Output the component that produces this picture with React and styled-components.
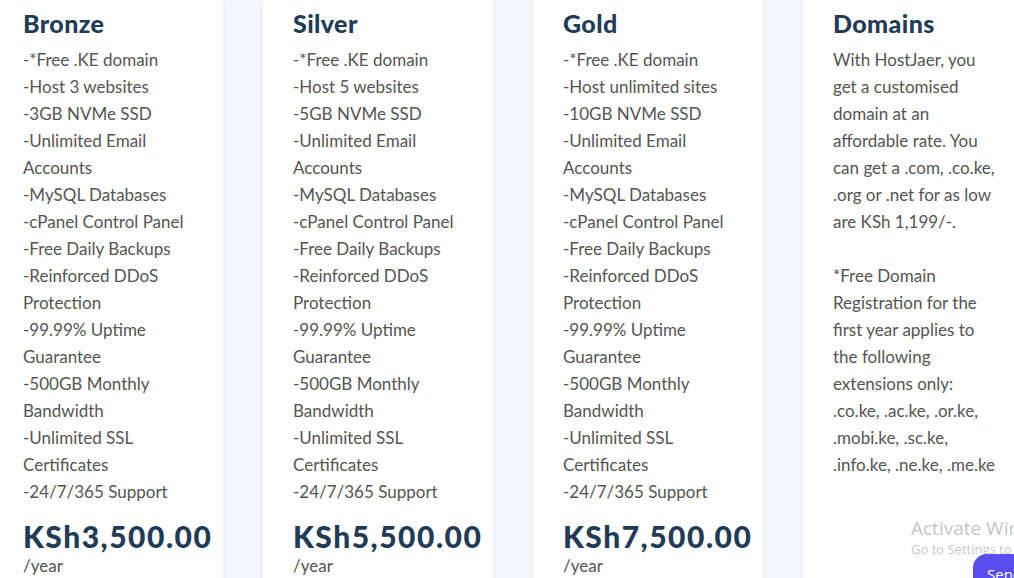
import styled, { createGlobalStyle } from "styled-components";

const GlobalStyle = createGlobalStyle`
  html, body {
    margin: 0;
    padding: 0;
    background: #f4f7fb;
    overflow: hidden;
  }
  body {
    font-family: Lato, "Open Sans", sans-serif;
  }
`;

const plans = [
  {
    name: "Bronze",
    sites: "-Host 3 websites",
    ssd: "-3GB NVMe SSD",
    price: "KSh3,500.00",
  },
  {
    name: "Silver",
    sites: "-Host 5 websites",
    ssd: "-5GB NVMe SSD",
    price: "KSh5,500.00",
  },
  {
    name: "Gold",
    sites: "-Host unlimited sites",
    ssd: "-10GB NVMe SSD",
    price: "KSh7,500.00",
  },
];

// shared features for every plan
const common = [
  "-MySQL Databases",
  "-cPanel Control Panel",
  "-Free Daily Backups",
  "-Reinforced DDoS Protection",
  "-99.99% Uptime Guarantee",
  "-500GB Monthly Bandwidth",
  "-Unlimited SSL Certificates",
  "-24/7/365 Support",
];

function App() {
  return (
    <Page>
      <GlobalStyle />
      <Row>
        {plans.map((plan) => (
          <Card key={plan.name}>
            <Title>{plan.name}</Title>
            <Features>
              <li>-*Free .KE domain</li>
              <li>{plan.sites}</li>
              <li>{plan.ssd}</li>
              <li>-Unlimited Email Accounts</li>
              {common.map((item) => (
                <li key={item}>{item}</li>
              ))}
            </Features>
            <Price>{plan.price}</Price>
            <Per>/year</Per>
          </Card>
        ))}
        <Card>
          <Title>Domains</Title>
          <Text>
            With HostJaer, you get a customised domain at an affordable rate.
            You can get a .com, .co.ke, .org or .net for as low are KSh
            1,199/-.
          </Text>
          <Text>
            *Free Domain Registration for the first year applies to the
            following extensions only: .co.ke, .ac.ke, .or.ke, .mobi.ke,
            .sc.ke, .info.ke, .ne.ke, .me.ke
          </Text>
        </Card>
      </Row>
      <Watermark>
        <strong>Activate Windows</strong>
        <span>Go to Settings to activate Windows.</span>
      </Watermark>
      <ChatButton>Send</ChatButton>
    </Page>
  );
}

export default App;

const Page = styled.div`
  position: relative;
  width: 1014px;
  height: 578px;
  overflow: hidden;
`;

const Row = styled.div`
  display: flex;
  gap: 40px;
  margin-left: -7px;
`;

const Card = styled.div`
  flex: 0 0 230px;
  width: 230px;
  min-width: 0;
  box-sizing: border-box;
  background: #fff;
  padding: 7px 30px 0;
  height: 600px;
  box-shadow: 0 0 6px rgba(40, 70, 110, 0.08);
`;

const Title = styled.h2`
  margin: 0 0 7px;
  font-family: Lato, sans-serif;
  font-weight: 900;
  font-size: 25px;
  line-height: 32px;
  letter-spacing: 0.4px;
  color: #1f3b55;
`;

const Features = styled.ul`
  list-style: none;
  margin: 0;
  padding: 0;
  font-size: 17px;
  line-height: 27px;
  color: #555;
`;

const Text = styled.p`
  margin: 0 0 27px;
  font-size: 17px;
  line-height: 27px;
  color: #555;
`;

const Price = styled.div`
  margin-top: 14px;
  font-weight: 900;
  font-size: 30px;
  line-height: 34px;
  color: #1f3b55;
  letter-spacing: 1.5px;
  white-space: nowrap;
`;

const Per = styled.div`
  margin-top: 2px;
  font-size: 17px;
  line-height: 22px;
  color: #555;
`;

const Watermark = styled.div`
  position: absolute;
  left: 911px;
  top: 516px;
  display: flex;
  flex-direction: column;
  white-space: nowrap;
  font-family: "Open Sans", sans-serif;
  color: rgba(120, 120, 120, 0.45);
  strong {
    font-weight: 400;
    font-size: 19px;
    line-height: 24px;
  }
  span {
    font-size: 13px;
    line-height: 18px;
  }
`;

const ChatButton = styled.div`
  position: absolute;
  left: 973px;
  top: 554px;
  width: 90px;
  height: 40px;
  border-radius: 14px;
  background: #5b4ef0;
  color: #fff;
  font-family: "Open Sans", sans-serif;
  font-size: 15px;
  padding: 10px 14px;
  box-sizing: border-box;
`;
